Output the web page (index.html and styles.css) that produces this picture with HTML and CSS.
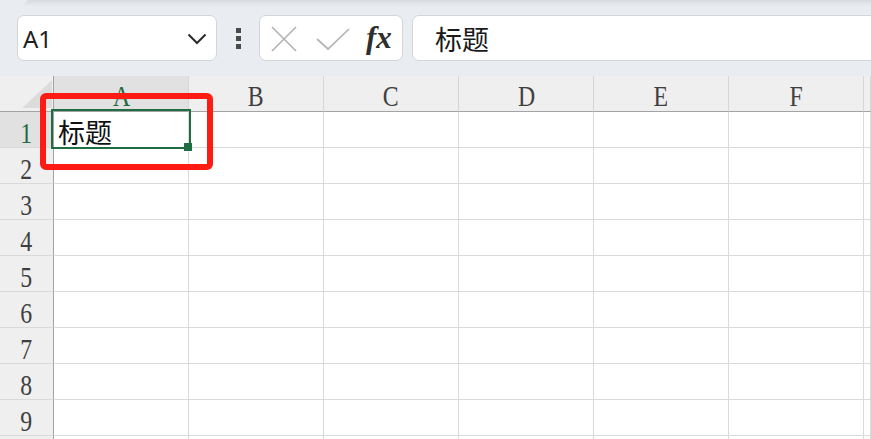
FILE: index.html
```html
<!DOCTYPE html>
<html lang="zh">
<head>
<meta charset="utf-8">
<title>Sheet</title>
<link rel="stylesheet" href="styles.css">
</head>
<body>
<div class="toolbar">
  <div class="ribbon-edge"></div>
  <div class="bar-row">
    <div class="name-box">
      <span class="name-text">A1</span>
      <svg class="chev" width="20" height="12" viewBox="0 0 20 12"><path d="M1.5 1.5 L10 10 L18.5 1.5" fill="none" stroke="#2b2b2b" stroke-width="2"/></svg>
    </div>
    <div class="dots"><span></span><span></span><span></span></div>
    <div class="fx-box">
      <svg class="ico-x" width="26" height="26" viewBox="0 0 26 26"><path d="M1 1 L25 25 M25 1 L1 25" stroke="#b4b4b4" stroke-width="1.7" fill="none"/></svg>
      <svg class="ico-check" width="34" height="24" viewBox="0 0 34 24"><path d="M1 12 L12 22 L33 2" stroke="#b4b4b4" stroke-width="1.7" fill="none"/></svg>
      <span class="fx">fx</span>
    </div>
    <div class="formula">标题</div>
  </div>
</div>
<div class="sheet">
  <div class="grid">
    <div class="corner"><span class="tri"></span></div>
    <div class="ch sel"><span>A</span></div>
    <div class="ch"><span>B</span></div>
    <div class="ch"><span>C</span></div>
    <div class="ch"><span>D</span></div>
    <div class="ch"><span>E</span></div>
    <div class="ch"><span>F</span></div>
    <div class="ch"></div>

    <div class="rh sel"><span>1</span></div>
    <div class="c"><span class="val">标题</span></div><div class="c"></div><div class="c"></div><div class="c"></div><div class="c"></div><div class="c"></div><div class="c"></div>
    <div class="rh"><span>2</span></div>
    <div class="c"></div><div class="c"></div><div class="c"></div><div class="c"></div><div class="c"></div><div class="c"></div><div class="c"></div>
    <div class="rh"><span>3</span></div>
    <div class="c"></div><div class="c"></div><div class="c"></div><div class="c"></div><div class="c"></div><div class="c"></div><div class="c"></div>
    <div class="rh"><span>4</span></div>
    <div class="c"></div><div class="c"></div><div class="c"></div><div class="c"></div><div class="c"></div><div class="c"></div><div class="c"></div>
    <div class="rh"><span>5</span></div>
    <div class="c"></div><div class="c"></div><div class="c"></div><div class="c"></div><div class="c"></div><div class="c"></div><div class="c"></div>
    <div class="rh"><span>6</span></div>
    <div class="c"></div><div class="c"></div><div class="c"></div><div class="c"></div><div class="c"></div><div class="c"></div><div class="c"></div>
    <div class="rh"><span>7</span></div>
    <div class="c"></div><div class="c"></div><div class="c"></div><div class="c"></div><div class="c"></div><div class="c"></div><div class="c"></div>
    <div class="rh"><span>8</span></div>
    <div class="c"></div><div class="c"></div><div class="c"></div><div class="c"></div><div class="c"></div><div class="c"></div><div class="c"></div>
    <div class="rh"><span>9</span></div>
    <div class="c"></div><div class="c"></div><div class="c"></div><div class="c"></div><div class="c"></div><div class="c"></div><div class="c"></div>
    <div class="rh"></div>
    <div class="c"></div><div class="c"></div><div class="c"></div><div class="c"></div><div class="c"></div><div class="c"></div><div class="c"></div>
  </div>
  <div class="selection"><span class="handle"></span></div>
  <div class="red-frame"></div>
</div>
</body>
</html>
```
FILE: styles.css
```css
* { box-sizing: border-box; }
html, body { margin: 0; padding: 0; }
body {
  width: 871px;
  height: 439px;
  overflow: hidden;
  background: #ffffff;
  font-family: "Noto Sans", "Liberation Sans", sans-serif;
}
.toolbar {
  height: 76px;
  background: #e9ecf0;
  overflow: hidden;
}
.ribbon-edge {
  height: 7px;
  margin-left: 24px;
  background: linear-gradient(to bottom, #d6d9de 0%, #e3e6ea 60%, #e9ecf0 100%);
  border-top-left-radius: 6px;
}
.bar-row {
  display: flex;
  align-items: stretch;
  height: 46px;
  margin-top: 8px;
  padding-left: 17px;
}
.name-box {
  width: 200px;
  background: #fff;
  border: 1px solid #d3d5d8;
  border-radius: 7px;
  display: flex;
  align-items: center;
  justify-content: space-between;
  padding: 0 9px 0 5px;
}
.name-text {
  font-family: "Noto Sans", "Liberation Sans", sans-serif;
  font-size: 24px;
  color: #1f1f1f;
  line-height: 1;
  padding-top: 1px;
}
.chev { margin-top: 2px; }
.dots {
  width: 42px;
  display: flex;
  flex-direction: column;
  align-items: center;
  justify-content: center;
  gap: 3px;
}
.dots span {
  width: 5px;
  height: 5px;
  background: #4a4a4a;
}
.fx-box {
  width: 144px;
  background: #fff;
  border: 1px solid #d3d5d8;
  border-radius: 7px;
  display: flex;
  align-items: center;
  padding-left: 11px;
}
.ico-x { margin-top: 1px; }
.ico-check { margin-left: 19px; margin-top: 2px; }
.fx {
  margin-left: 16px;
  font-family: "Liberation Serif", serif;
  font-style: italic;
  font-weight: bold;
  font-size: 31px;
  color: #2e2e2e;
  line-height: 1;
  margin-top: -2px;
}
.formula {
  flex: 1;
  margin-left: 9px;
  margin-right: -30px;
  background: #fff;
  border: 1px solid #d3d5d8;
  border-radius: 7px;
  padding-left: 22px;
  display: flex;
  align-items: center;
  font-family: "Noto Sans CJK SC", sans-serif;
  font-size: 27px;
  color: #1a1a1a;
}
.sheet {
  position: relative;
  height: 363px;
  overflow: hidden;
}
.grid {
  display: grid;
  grid-template-columns: 54px repeat(6, 135px) 1fr;
  grid-auto-rows: 36px;
}
.corner {
  background: #efefef;
  border-right: 1px solid #a3a3a3;
  border-bottom: 1px solid #a3a3a3;
  display: flex;
  align-items: flex-end;
  justify-content: flex-end;
  padding: 0 1px 3px 0;
}
.tri {
  width: 30px;
  height: 28px;
  background: #dcdcdc;
  clip-path: polygon(100% 0, 100% 100%, 0 100%);
}
.ch {
  background: #efefef;
  border-right: 1px solid #d6d6d6;
  border-bottom: 1px solid #a3a3a3;
  display: flex;
  justify-content: center;
  align-items: center;
  padding-top: 6px;
}
.ch span, .rh span {
  display: inline-block;
  font-family: "Liberation Serif", serif;
  font-size: 29px;
  line-height: 1;
  color: #3f3f3f;
  transform: scaleX(0.82);
}
.ch.sel, .rh.sel { background: #e1e1e1; }
.ch.sel span, .rh.sel span { color: #1e6b41; }
.rh {
  background: #efefef;
  border-right: 1px solid #a3a3a3;
  border-bottom: 1px solid #dadada;
  display: flex;
  justify-content: center;
  align-items: center;
  padding-top: 7px;
}
.c {
  border-right: 1px solid #dadada;
  border-bottom: 1px solid #dadada;
  display: flex;
  align-items: center;
  padding-left: 4px;
}
.val {
  font-family: "Noto Sans CJK SC", sans-serif;
  font-size: 27px;
  color: #111;
  line-height: 1;
  padding-top: 4px;
}
.selection {
  position: absolute;
  left: 51px;
  top: 33px;
  width: 140px;
  height: 40px;
  border: 2px solid #1f6e43;
}
.handle {
  position: absolute;
  left: 131px;
  top: 32px;
  width: 8px;
  height: 8px;
  background: #1f6e43;
}
.red-frame {
  position: absolute;
  left: 40px;
  top: 17px;
  width: 173px;
  height: 77px;
  border: 6px solid #fe1b13;
  border-radius: 6px;
}
```
